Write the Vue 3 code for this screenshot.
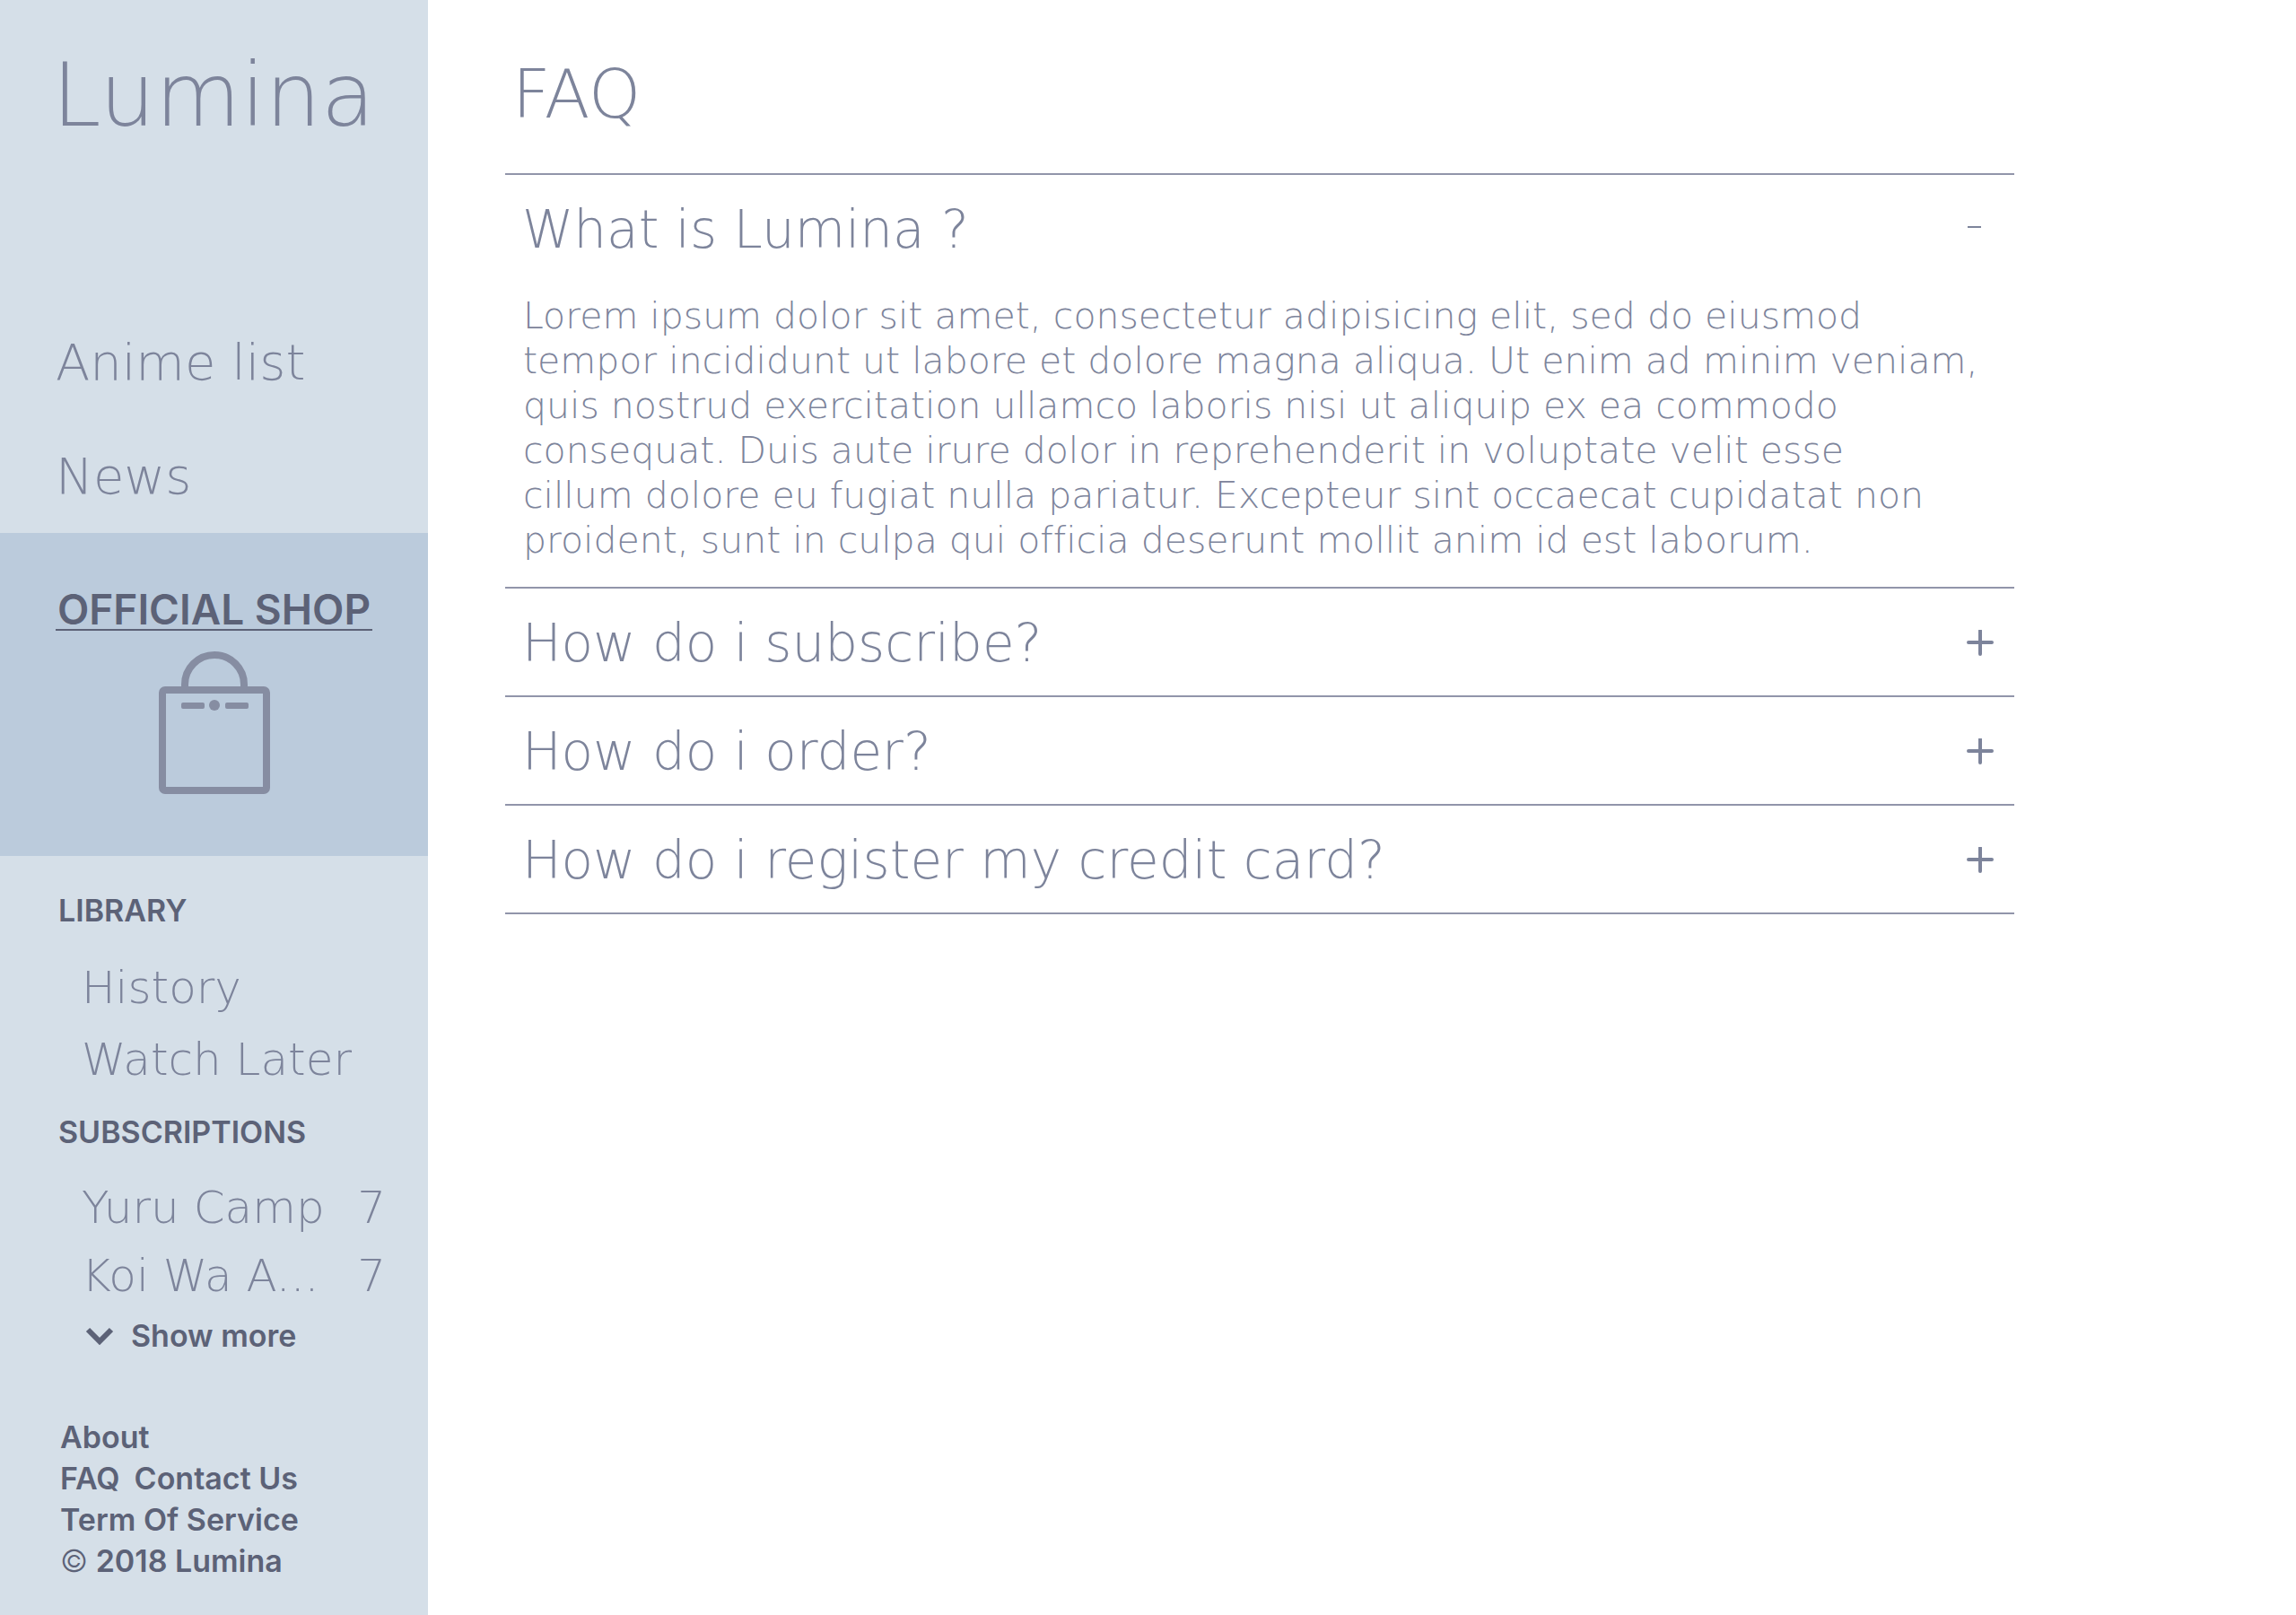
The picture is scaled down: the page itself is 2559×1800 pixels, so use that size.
<script setup>
import { ref } from 'vue'

const library = ['History', 'Watch Later']
const subscriptions = [
  { name: 'Yuru Camp', count: 7 },
  { name: 'Koi Wa A...', count: 7 },
]

const loremLines = [
  'Lorem ipsum dolor sit amet, consectetur adipisicing elit, sed do eiusmod',
  'tempor incididunt ut labore et dolore magna aliqua. Ut enim ad minim veniam,',
  'quis nostrud exercitation ullamco laboris nisi ut aliquip ex ea commodo',
  'consequat. Duis aute irure dolor in reprehenderit in voluptate velit esse',
  'cillum dolore eu fugiat nulla pariatur. Excepteur sint occaecat cupidatat non',
  'proident, sunt in culpa qui officia deserunt mollit anim id est laborum.',
]

const questions = [
  { id: 'what', title: 'What is Lumina ?' },
  { id: 'subscribe', title: 'How do i subscribe?' },
  { id: 'order', title: 'How do i order?' },
  { id: 'card', title: 'How do i register my credit card?' },
]

const open = ref('what')
const toggle = (id) => {
  open.value = open.value === id ? '' : id
}
</script>

<template>
  <div class="layout">
    <aside class="sidebar">
      <a href="#" class="logo">Lumina</a>

      <nav class="main-nav" aria-label="Main">
        <a href="#anime">Anime list</a>
        <a href="#news">News</a>
      </nav>

      <a href="#shop" class="shop">
        <span class="shop-title">OFFICIAL SHOP</span>
        <svg class="bag" viewBox="0 0 124 160" aria-hidden="true">
          <g fill="none" stroke="currentColor" stroke-width="8">
            <path d="M29 40V37a33 33 0 0 1 66 0V40" />
            <rect x="4" y="43" width="116" height="112" rx="3" />
          </g>
          <g fill="currentColor">
            <rect x="25" y="57" width="26" height="7" rx="2" />
            <circle cx="62" cy="60" r="6" />
            <rect x="74" y="57" width="26" height="7" rx="2" />
          </g>
        </svg>
      </a>

      <section class="group">
        <h2>LIBRARY</h2>
        <ul class="library">
          <li v-for="item in library" :key="item"><a href="#library">{{ item }}</a></li>
        </ul>
      </section>

      <section class="group subs">
        <h2>SUBSCRIPTIONS</h2>
        <ul>
          <li v-for="item in subscriptions" :key="item.name">
            <a href="#sub">{{ item.name }}</a>
            <span>{{ item.count }}</span>
          </li>
        </ul>
        <button type="button" class="more">
          <svg viewBox="0 0 32 20" aria-hidden="true">
            <path d="M3 3 16 16 29 3" fill="none" stroke="currentColor" stroke-width="6" />
          </svg>
          Show more
        </button>
      </section>

      <footer class="footer">
        <div><a href="#about">About</a></div>
        <div class="pair"><a href="#faq">FAQ</a><a href="#contact">Contact Us</a></div>
        <div><a href="#terms">Term Of Service</a></div>
        <div><span class="mark">©</span> 2018 Lumina</div>
      </footer>
    </aside>

    <main class="content">
      <h1>FAQ</h1>
      <div class="faq">
        <section v-for="q in questions" :key="q.id" class="item">
          <h2>
            <button type="button" :aria-expanded="open === q.id" @click="toggle(q.id)">
              {{ q.title }}
              <svg viewBox="0 0 30 30" aria-hidden="true">
                <path v-if="open === q.id" d="M1 12H16" stroke="currentColor" stroke-width="2" />
                <path
                  v-else
                  d="M15 1V27M2 14H28"
                  stroke="currentColor"
                  stroke-width="4"
                  stroke-linecap="round"
                />
              </svg>
            </button>
          </h2>
          <p v-if="open === q.id">
            <span v-for="line in loremLines" :key="line">{{ line }}</span>
          </p>
        </section>
      </div>
    </main>
  </div>
</template>

<style>
body {
  margin: 0;
  background: #fff;
}
</style>

<style scoped>
.layout {
  display: flex;
  min-height: 100vh;
  color: #7d849b;
  font-family: 'DejaVu Sans', sans-serif;
  font-weight: 200;
  font-variant-ligatures: none;
}

a {
  color: inherit;
  text-decoration: none;
}

h1,
h2,
p,
ul {
  margin: 0;
  padding: 0;
  font-weight: inherit;
  list-style: none;
}

button {
  display: flex;
  align-items: center;
  margin: 0;
  padding: 0;
  border: 0;
  background: none;
  color: inherit;
  font: inherit;
  text-align: left;
  cursor: pointer;
}

.sidebar {
  flex: 0 0 477px;
  display: flex;
  flex-direction: column;
  box-sizing: border-box;
  padding-top: 50px;
  background: #d5dfe8;
}

.logo {
  padding-left: 58px;
  font-size: 98px;
  line-height: 112px;
}

.main-nav {
  display: flex;
  flex-direction: column;
  margin-top: 176px;
  padding: 2px 0 0 62px;
  font-size: 56px;
  line-height: 127px;
}

.shop {
  display: flex;
  flex-direction: column;
  align-items: center;
  box-sizing: border-box;
  height: 360px;
  padding-top: 63px;
  background: #bbcbdc;
}

.shop-title {
  padding: 0 2px;
  border-bottom: 2px solid #5c6277;
  color: #5c6277;
  font-family: Inter, sans-serif;
  font-size: 46px;
  font-weight: 600;
  line-height: 44px;
}

.bag {
  width: 124px;
  height: 160px;
  margin-top: 23px;
  color: #868da2;
}

.group {
  padding: 41px 47px 0 65px;
}

.group h2,
.more,
.footer {
  color: #5c6277;
  font-family: Inter, sans-serif;
  font-size: 34px;
  font-weight: 600;
  line-height: 40px;
}

.group ul {
  padding: 26px 0 0 26px;
  font-size: 50px;
  line-height: 76px;
}

.group .library {
  line-height: 80px;
}

.group li {
  display: flex;
  justify-content: space-between;
}

.subs {
  padding-top: 21px;
}

.more {
  gap: 19px;
  margin: 9px 0 0 30px;
}

.more svg {
  width: 32px;
  height: 20px;
}

.footer {
  margin-top: 70px;
  padding: 0 20px 36px 67px;
  line-height: 46px;
}

.pair {
  display: flex;
  gap: 16px;
}

.mark {
  font-weight: 300;
}

.content {
  flex: 1;
  padding: 65px 314px 65px 86px;
}

h1 {
  padding-left: 8px;
  font-size: 74px;
  line-height: 80px;
}

.faq {
  margin-top: 48px;
  border-top: 2px solid #9195aa;
}

.item {
  border-bottom: 2px solid #9195aa;
}

.item button {
  justify-content: space-between;
  width: 100%;
  padding: 3px 23px 0 19px;
  font-size: 58px;
  line-height: 116px;
}

.item svg {
  width: 30px;
  height: 30px;
}

.item p {
  padding: 13px 20px 27px;
  font-size: 41px;
  line-height: 50px;
}

.item p span {
  display: block;
}
</style>
